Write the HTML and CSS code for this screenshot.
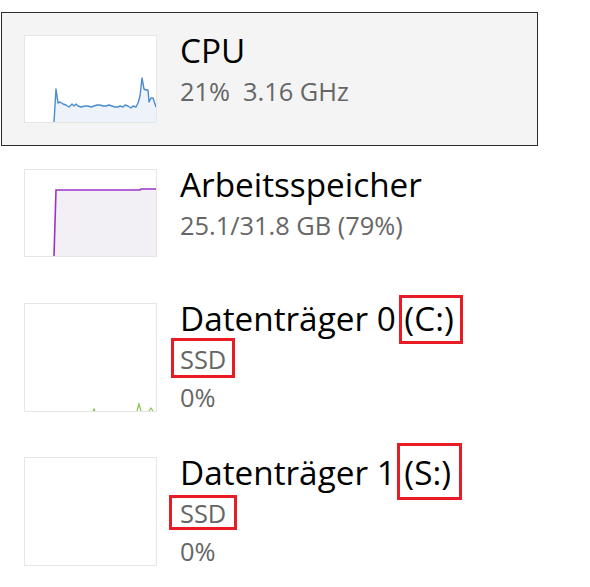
FILE: index.html
```html
<!DOCTYPE html>
<html lang="de">
<head>
<meta charset="utf-8">
<title>Leistung</title>
<link rel="stylesheet" href="styles.css">
</head>
<body>
<div class="list">
  <div class="item selected">
    <div class="graph">
      <svg class="chart" viewBox="0 0 131 86" preserveAspectRatio="none">
        <path class="cpu-fill" d="M29,86 L31,53 L33,67 L35,66 L38,68 L41,69 L44,71 L47,68 L49,70 L51,68 L53,70 L56,71 L60,70 L63,70 L66,71 L69,70 L72,69 L75,69 L78,70 L81,70 L84,69 L87,70 L90,71 L93,71 L95,70 L98,71 L100,69 L103,70 L106,72 L108,70 L111,71 L113,67 L115,60 L117,42 L119,53 L121,54 L123,54 L124,66 L126,62 L128,62 L130,68 L131,71 L131,86 Z"/>
        <path class="cpu-line" d="M29,86 L31,53 L33,67 L35,66 L38,68 L41,69 L44,71 L47,68 L49,70 L51,68 L53,70 L56,71 L60,70 L63,70 L66,71 L69,70 L72,69 L75,69 L78,70 L81,70 L84,69 L87,70 L90,71 L93,71 L95,70 L98,71 L100,69 L103,70 L106,72 L108,70 L111,71 L113,67 L115,60 L117,42 L119,53 L121,54 L123,54 L124,66 L126,62 L128,62 L130,68 L131,71"/>
      </svg>
    </div>
    <div class="info">
      <div class="title">CPU</div>
      <div class="sub">21%<span class="gap"></span>3.16 GHz</div>
    </div>
  </div>

  <div class="item">
    <div class="graph">
      <svg class="chart" viewBox="0 0 131 86" preserveAspectRatio="none">
        <path class="mem-fill" d="M29,86 L31,20 L115,20 L116,19 L131,19 L131,86 Z"/>
        <path class="mem-line" d="M29,86 L31,20 L115,20 L116,19 L131,19"/>
      </svg>
    </div>
    <div class="info">
      <div class="title">Arbeitsspeicher</div>
      <div class="sub">25.1/31.8 GB (79%)</div>
    </div>
  </div>

  <div class="item disk">
    <div class="graph">
      <svg class="chart" viewBox="0 0 131 107" preserveAspectRatio="none">
        <path class="disk-line" d="M68,107 L69,105 L70,107 M112,107 L114,100 L116,107 M124,107 L126,104 L128,107"/>
      </svg>
    </div>
    <div class="info">
      <div class="title">Datenträger 0 <span class="mark mark-c">(C:)</span></div>
      <div class="sub"><span class="mark mark-ssd0">SSD</span></div>
      <div class="sub">0%</div>
    </div>
  </div>

  <div class="item disk">
    <div class="graph"></div>
    <div class="info">
      <div class="title">Datenträger 1 <span class="mark mark-s">(S:)</span></div>
      <div class="sub"><span class="mark mark-ssd1">SSD</span></div>
      <div class="sub">0%</div>
    </div>
  </div>
</div>
</body>
</html>
```

FILE: styles.css
```css
html, body {
  margin: 0;
  padding: 0;
  background: #ffffff;
}

body {
  font-family: "Open Sans", "Noto Sans", "Liberation Sans", sans-serif;
  width: 590px;
  height: 587px;
  overflow: hidden;
}

.list {
  display: flex;
  flex-direction: column;
  padding-top: 12px;
  padding-left: 1px;
}

.item {
  display: flex;
  align-items: flex-start;
  width: 513px;
  border: 1px solid transparent;
  padding: 22px 0 22px 22px;
  gap: 23px;
  box-sizing: content-box;
}

.item.disk {
  padding-bottom: 21px;
}

.item.selected {
  background: #f4f4f4;
  border-color: #2c2c2c;
}

.graph {
  width: 131px;
  height: 86px;
  border: 1px solid #e6e6e6;
  background: #ffffff;
  flex: none;
}

.disk .graph {
  height: 107px;
}

.chart {
  display: block;
  width: 100%;
  height: 100%;
}

.cpu-fill {
  fill: #eef3f9;
}

.cpu-line {
  fill: none;
  stroke: #4a8ccf;
  stroke-width: 1.4;
  stroke-linejoin: round;
}

.mem-fill {
  fill: #f2f0f4;
}

.mem-line {
  fill: none;
  stroke: #9a33cc;
  stroke-width: 1.6;
}

.disk-line {
  fill: none;
  stroke: #8cc152;
  stroke-width: 1.2;
}

.info {
  display: flex;
  flex-direction: column;
  margin-top: -7px;
  margin-bottom: -10px;
}

.title {
  font-size: 33.3px;
  line-height: 44px;
  color: #000000;
  white-space: nowrap;
}

.sub {
  font-size: 25.4px;
  line-height: 38px;
  color: #666666;
  white-space: nowrap;
}

.gap {
  display: inline-block;
  width: 13px;
}

.mark {
  position: relative;
}

.mark::after {
  content: "";
  position: absolute;
  border: 3px solid #e81c24;
}

.mark-c::after {
  left: -5px;
  right: -9px;
  top: 0;
  bottom: -3px;
}

.mark-s::after {
  left: -7px;
  right: -11px;
  top: -6px;
  bottom: -5px;
}

.mark-ssd0::after {
  left: -9px;
  right: -9px;
  top: -4px;
  bottom: -2px;
}

.mark-ssd1::after {
  left: -11px;
  right: -11px;
  top: -1px;
  bottom: 0;
}
```
